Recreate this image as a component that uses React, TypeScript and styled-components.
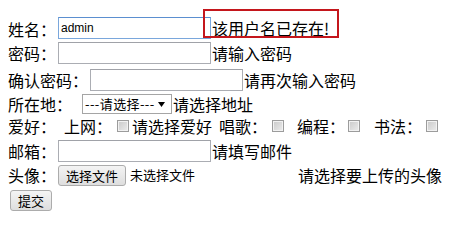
import React from 'react'
import styled, { createGlobalStyle } from 'styled-components'

const GlobalStyle = createGlobalStyle`
    body {
        margin: 0;
        background: #fff;
        color: #000;
        font-family: 'Noto Sans CJK SC', 'Liberation Sans', sans-serif;
        font-size: 16px;
    }
`

const App = () => {
    return (
        <>
            <GlobalStyle />
            <Form onSubmit={(e) => e.preventDefault()}>
                <Row $h={31} $align="flex-end">
                    <Label>姓名：</Label>
                    <TextInput $focus defaultValue="admin" />
                    <ErrorMsg>该用户名已存在!</ErrorMsg>
                </Row>
                <Row $h={28}>
                    <Label>密码：</Label>
                    <TextInput type="password" />
                    <Hint>请输入密码</Hint>
                </Row>
                <Row $h={26}>
                    <Label>确认密码：</Label>
                    <TextInput type="password" />
                    <Hint>请再次输入密码</Hint>
                </Row>
                <Row $h={22}>
                    <Label>所在地：</Label>
                    <SelectBox>
                        <span>---请选择---</span>
                        <svg width="7" height="5" viewBox="0 0 7 5">
                            <path d="M0 0h7L3.5 5z" fill="#000" />
                        </svg>
                    </SelectBox>
                    <Hint>请选择地址</Hint>
                </Row>
                <Row $h={21}>
                    <Label>爱好：</Label>
                    <Text $ml={8}>上网：</Text>
                    <Check $ml={5} />
                    <Text $ml={3}>请选择爱好</Text>
                    <Text $ml={7}>唱歌：</Text>
                    <Check $ml={5} />
                    <Text $ml={13}>编程：</Text>
                    <Check $ml={3} />
                    <Text $ml={14}>书法：</Text>
                    <Check $ml={4} />
                </Row>
                <Row $h={29}>
                    <Label>邮箱：</Label>
                    <TextInput type="email" />
                    <Hint>请填写邮件</Hint>
                </Row>
                <Row $h={20}>
                    <Label>头像：</Label>
                    <Button type="button" $w={68}>选择文件</Button>
                    <FileName>未选择文件</FileName>
                    <Text $ml={103}>请选择要上传的头像</Text>
                </Row>
                <Row $h={30}>
                    <Button type="submit" $w={42} $ml={2}>提交</Button>
                </Row>
            </Form>
        </>
    )
}

export default App

const Form = styled.form`
    padding: 8px 8px 0;
    width: 450px;
`

const Row = styled.div<{ $h: number; $align?: string }>`
    display: flex;
    align-items: ${({ $align }) => $align || 'center'};
    height: ${({ $h }) => $h}px;
    white-space: nowrap;
`

const Label = styled.span`
    line-height: 20px;
`

const Text = styled.span<{ $ml?: number }>`
    line-height: 20px;
    margin-left: ${({ $ml }) => $ml || 0}px;
`

const Hint = styled.span`
    line-height: 20px;
    margin-left: 1px;
`

const TextInput = styled.input<{ $focus?: boolean }>`
    box-sizing: border-box;
    width: 153px;
    height: 22px;
    margin: 0 0 0 2px;
    padding: 0 2px;
    border: 1px solid ${({ $focus }) => ($focus ? '#7aa7dc' : '#abadb3')};
    border-top-color: ${({ $focus }) => ($focus ? '#5b8fd0' : '#a0a2a8')};
    font-family: 'Liberation Sans', Arial, sans-serif;
    font-size: 12px;
    color: #000;
    outline: none;
    background: #fff;
`

const ErrorMsg = styled.span`
    position: relative;
    line-height: 20px;
    margin: 0 0 1px 1px;

    &::after {
        content: '';
        position: absolute;
        left: -9px;
        right: -10px;
        top: -9px;
        bottom: 0;
        border: 2px solid #c4161c;
    }
`

const SelectBox = styled.div`
    box-sizing: border-box;
    display: flex;
    align-items: center;
    justify-content: space-between;
    width: 90px;
    height: 20px;
    margin-left: 10px;
    padding: 0 6px 0 2px;
    border: 1px solid #a5a5a5;
    background: #fff;
    font-size: 13px;
    line-height: 18px;

    span {
        letter-spacing: 0.4px;
    }

    svg {
        flex: none;
    }
`

const Check = styled.span<{ $ml?: number }>`
    box-sizing: border-box;
    flex: none;
    width: 12px;
    height: 12px;
    margin-left: ${({ $ml }) => $ml || 0}px;
    border: 1px solid #9c9c9c;
    background: linear-gradient(135deg, #c9c9c9, #ececec);
    box-shadow: inset 0 0 0 1px #f2f2f2;
`

const Button = styled.button<{ $w: number; $ml?: number }>`
    box-sizing: border-box;
    width: ${({ $w }) => $w}px;
    height: 21px;
    margin: 0 0 0 ${({ $ml }) => ($ml === undefined ? 2 : $ml)}px;
    padding: 0;
    border: 1px solid #acacac;
    border-radius: 3px;
    background: linear-gradient(#f4f4f4, #dedede);
    font-family: 'Noto Sans CJK SC', sans-serif;
    font-size: 13px;
    line-height: 19px;
    color: #000;
`

const FileName = styled.span`
    margin-left: 4px;
    font-size: 13px;
    line-height: 20px;
`
